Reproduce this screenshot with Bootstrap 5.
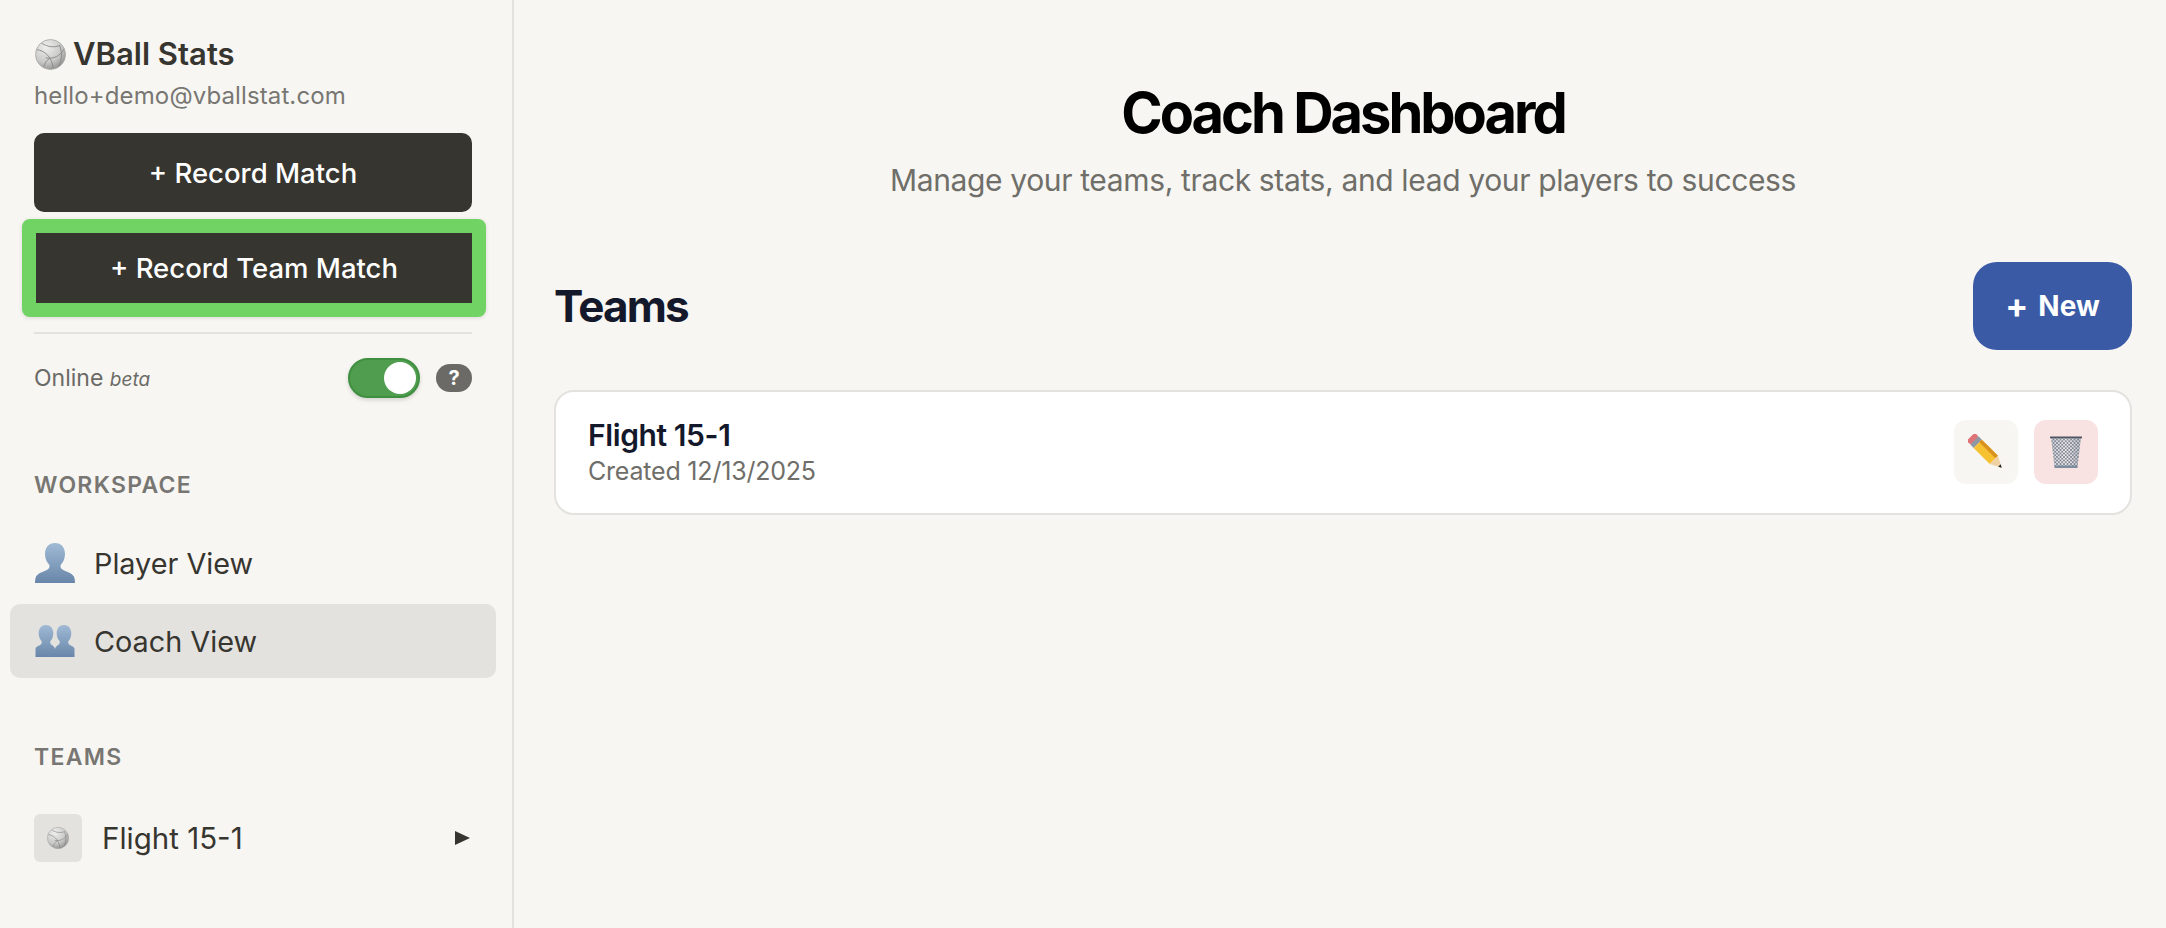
<!DOCTYPE html>
<html lang="en">
<head>
<meta charset="utf-8">
<title>VBall Stats</title>
<link href="https://cdn.jsdelivr.net/npm/bootstrap@5.3.0/dist/css/bootstrap.min.css" rel="stylesheet">
<style>
html,body{height:100%}
body{font-family:Inter,"Liberation Sans",sans-serif;background:#f7f6f2;color:#37352f;overflow:hidden}
.shell{height:928px}
.side{width:514px;flex:none;border-right:2px solid #e3e2de;padding:36px 40px 0 34px}
.brand{font-size:31px;line-height:36px;font-weight:600;color:#37352f;gap:7px;margin:0 0 0 1px}
.mailtxt{font-size:24px;line-height:30px;letter-spacing:.12px;color:#787672;margin:9px 0 0 0}
.recbtn{display:block;width:100%;height:79px;margin-top:22px;background:#37352f;border:0;border-radius:10px;color:#fff;font-size:27.5px;font-weight:500;padding:2px 0 0}
.recbtn:hover{background:#37352f;color:#fff}
.hilite{display:block;margin:7px -14px 0 -12px;width:calc(100% + 26px);height:98px;background:#37352f;border:14px solid #70d364;border-radius:8px;color:#fff;font-size:27.5px;font-weight:500;padding:2px 0 0;box-shadow:0 1px 4px rgba(0,0,0,.12)}
.rule{height:2px;background:#e3e2de;margin-top:15px}
.onrow{margin-top:24px;height:40px}
.ontxt{font-size:23px;color:#6b6a66}
.ontxt em{font-size:19px}
.swi{width:72px;height:40px;border-radius:20px;background:#509d4f;border:2px solid #3f8f41;box-shadow:0 2px 4px rgba(0,0,0,.15);padding:2px;margin-right:16px}
.swi span{display:block;width:32px;height:32px;background:#fff;border-radius:50%}
.qpill{width:36px;height:28px;border-radius:14px;background:#6b6a66;color:#fff;font-size:20px;font-weight:700;line-height:28px;text-align:center}
.seclabel{font-size:23px;line-height:26px;font-weight:600;letter-spacing:1.3px;color:#787672;margin:0}
.wslabel{margin-top:74px}
.tmlabel{margin-top:66px}
.navi{display:flex;align-items:center;height:74px;margin:0 -24px;padding:0 0 0 25px;border-radius:10px;font-size:28.800px;color:#37352f;text-decoration:none;gap:19px}
.navi:hover{color:#37352f}
.navi svg{flex:none}
.navi .lbl{padding-top:2px}
.navi.onview{background:#e3e2de}
.wslist{margin-top:28px;gap:4px}
.teamrow{margin-top:44px;height:48px;font-size:29.500px;color:#37352f}
.tile{width:48px;height:48px;border-radius:6px;background:#e3e2de;margin-right:20px}
.tri{width:0;height:0;border-left:15px solid #37352f;border-top:7.5px solid transparent;border-bottom:7.5px solid transparent;margin-right:2px}
.mainzone{padding:0 34px 0 40px;min-width:0}
.dash{font-size:56px;line-height:68px;font-weight:700;letter-spacing:-3px;color:#000;margin:79px 0 0;text-align:center}
.subt{font-size:30px;line-height:38px;letter-spacing:-.36px;color:#6f6e69;margin:14px 0 0;text-align:center}
.teamhead{margin-top:63px;height:88px}
.teamhead h2{font-size:44px;line-height:54px;font-weight:700;letter-spacing:-1.8px;color:#14182b;margin:0}
.newbtn{width:159px;height:88px;background:#3a5aa6;border:0;border-radius:24px;color:#fff;font-size:28px;font-weight:700;padding:0;gap:10px}
.newbtn:hover{background:#3a5aa6;color:#fff}
.plusmk{font-size:34px;line-height:1}
.teamcard{margin-top:40px;height:125px;background:#fff;border:2px solid #e3e2de;border-radius:20px;padding:0 32px 2px}
.tname{font-size:30px;line-height:36px;font-weight:600;letter-spacing:-.4px;color:#14182b}
.tdate{font-size:25px;line-height:32px;letter-spacing:-.2px;color:#6f6e69;margin-top:2px}
.ic{width:64px;height:64px;border:0;border-radius:12px;padding:0;display:flex;align-items:center;justify-content:center}
.ic.ed{background:#f7f6f2}
.ic.del{background:#f9e2e2}
</style>
</head>
<body>
<svg width="0" height="0" class="d-block" aria-hidden="true">
<defs>
<radialGradient id="bg1" cx=".35" cy=".25" r=".85"><stop offset="0" stop-color="#efefed"/><stop offset=".6" stop-color="#c8c8c6"/><stop offset="1" stop-color="#878785"/></radialGradient>
<linearGradient id="pg" x1="0" y1="0" x2="0" y2="1"><stop offset="0" stop-color="#a0bad5"/><stop offset="1" stop-color="#6886a9"/></linearGradient>
<symbol id="ball" viewBox="0 0 32 32">
<circle cx="16" cy="16" r="15.5" fill="url(#bg1)"/>
<g fill="none" stroke="#858589" stroke-width=".9">
<path d="M7 4.500C14 8.500 20 9 26 6.500"/><path d="M2 11C9 12 17 17 19 30.500"/><path d="M30 10.500C26 17 20 21 11 19.500"/><path d="M15 20c-3 2-5 5-6 8.500"/><path d="M25.500 7c2.500 6 2.500 15-1 21"/>
</g>
<circle cx="16" cy="16" r="15.500" fill="none" stroke="#a6a6a4" stroke-width=".8"/>
</symbol>
<symbol id="pers" viewBox="0 0 40 40">
<path fill="url(#pg)" d="M20 0c6.300 0 10 4.600 10 11 0 4.500-1.800 8.400-4.300 10.700-.6 2.300.3 4.300 2.500 5.300 4 1.800 10.300 3.500 11.300 8.200.3 1.400.5 3.100.5 4.800H0c0-1.700.2-3.400.5-4.800 1-4.700 7.300-6.400 11.300-8.200 2.200-1 3.100-3 2.500-5.300C11.800 19.400 10 15.500 10 11 10 4.600 13.700 0 20 0z"/>
</symbol>
<symbol id="pers2" viewBox="0 0 40 32">
<path fill="url(#pg)" d="M11 0c4.300 0 7.300 3.400 7.300 8.200 0 3.400-1.300 6.300-3 8-.4 2 .4 3 2 4 1.800 1.200 2.300 2.500 2.700 3.700.4-1.200.9-2.500 2.700-3.700 1.600-1 2.400-2 2-4-1.700-1.700-3-4.600-3-8C21.700 3.400 24.700 0 29 0s7.300 3.400 7.300 8.200c0 3.400-1.300 6.300-3 8-.4 2 .4 3 2 4 .8.500 4.200 1.300 4.200 3.800V32H.500v-8c0-2.500 3.400-3.300 4.200-3.800 1.600-1 2.400-2 2-4-1.700-1.700-3-4.600-3-8C3.700 3.400 6.700 0 11 0z"/>
</symbol>
<pattern id="mesh" width="3.500" height="3.500" patternUnits="userSpaceOnUse"><path d="M0 0l3.500 3.500M3.500 0L0 3.500" stroke="#555b68" stroke-width=".6"/></pattern>
<linearGradient id="bin" x1="0" x2="1" y1="0" y2="0"><stop offset="0" stop-color="#d3d7df"/><stop offset=".5" stop-color="#efedf0"/><stop offset="1" stop-color="#c6cad3"/></linearGradient>
</defs>
</svg>
<div class="shell d-flex">
<aside class="side">
  <h1 class="brand d-flex align-items-center"><svg width="31" height="31"><use href="#ball"/></svg>VBall Stats</h1>
  <p class="mailtxt">hello+demo@vballstat.com</p>
  <button type="button" class="btn recbtn">+ Record Match</button>
  <button type="button" class="btn hilite">+ Record Team Match</button>
  <div class="rule"></div>
  <div class="onrow d-flex align-items-center">
    <span class="ontxt flex-grow-1">Online <em>beta</em></span>
    <div class="swi d-flex justify-content-end"><span></span></div>
    <div class="qpill">?</div>
  </div>
  <div class="seclabel wslabel">WORKSPACE</div>
  <div class="wslist d-flex flex-column">
    <a class="navi" href="#"><svg width="40" height="40"><use href="#pers"/></svg><span class="lbl">Player View</span></a>
    <a class="navi onview" href="#"><svg width="40" height="32"><use href="#pers2"/></svg><span class="lbl">Coach View</span></a>
  </div>
  <div class="seclabel tmlabel">TEAMS</div>
  <div class="teamrow d-flex align-items-center">
    <div class="tile d-flex align-items-center justify-content-center"><svg width="22" height="22"><use href="#ball"/></svg></div>
    <span class="flex-grow-1">Flight 15-1</span>
    <span class="tri"></span>
  </div>
</aside>
<main class="mainzone flex-grow-1">
  <h1 class="dash">Coach Dashboard</h1>
  <p class="subt">Manage your teams, track stats, and lead your players to success</p>
  <div class="teamhead d-flex align-items-center justify-content-between">
    <h2>Teams</h2>
    <button type="button" class="btn newbtn d-flex align-items-center justify-content-center"><span class="plusmk">+</span><span>New</span></button>
  </div>
  <div class="teamcard d-flex align-items-center justify-content-between">
    <div>
      <div class="tname">Flight 15-1</div>
      <div class="tdate">Created 12/13/2025</div>
    </div>
    <div class="d-flex gap-3">
      <button type="button" class="ic ed" aria-label="Edit"><svg width="36" height="36" viewBox="0 0 34 34">
        <g transform="rotate(-45 17 17)">
          <rect x="11.500" y="-3.500" width="11" height="5.500" rx="2.500" fill="#de7378"/>
          <rect x="11.500" y="1.500" width="11" height="4.500" fill="#8f97a3"/>
          <rect x="11.500" y="6" width="11" height="21.500" fill="#f6c232"/>
          <rect x="19" y="6" width="3.500" height="21.500" fill="#d9921d"/>
          <path d="M11.500 27.500h11L17 38z" fill="#eed2a4"/>
          <path d="M15.400 35h3.200L17 38z" fill="#222"/>
        </g></svg></button>
      <button type="button" class="ic del" aria-label="Delete"><svg width="32" height="32" viewBox="0 0 32 32">
        <path d="M1 1h30l-3.500 30h-23z" fill="url(#bin)"/>
        <path d="M1 1h30l-3.500 30h-23z" fill="url(#mesh)"/>
        <path d="M0 .5h32v1.800H0z" fill="#4f5763"/>
        <path d="M4.500 29.500h23V32h-23z" fill="#7d8d9f"/>
      </svg></button>
    </div>
  </div>
</main>
</div>
<script src="https://cdn.jsdelivr.net/npm/bootstrap@5.3.0/dist/js/bootstrap.bundle.min.js"></script>
</body>
</html>
